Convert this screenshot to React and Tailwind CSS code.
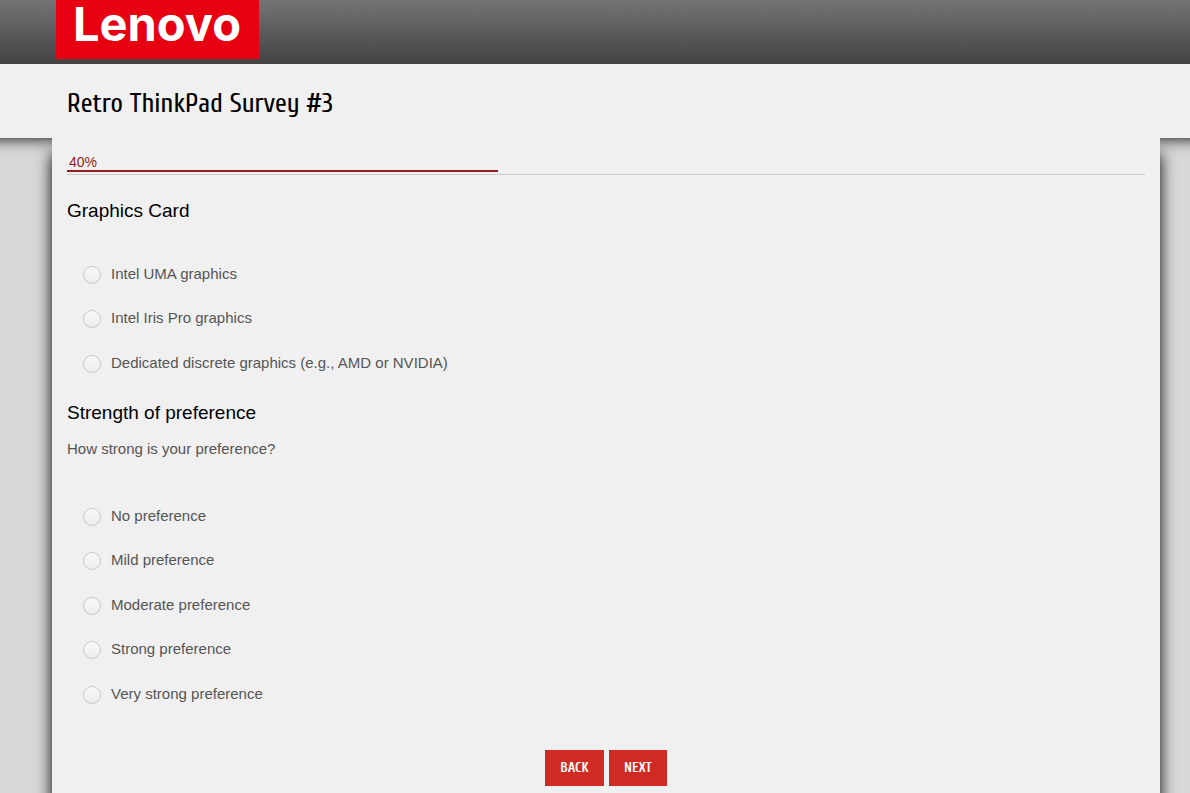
import React from 'react'

const graphics = [
    "Intel UMA graphics",
    "Intel Iris Pro graphics",
    "Dedicated discrete graphics (e.g., AMD or NVIDIA)",
];

const strengths = [
    "No preference",
    "Mild preference",
    "Moderate preference",
    "Strong preference",
    "Very strong preference",
];

function Logo() {
    return (
        <svg viewBox="0 0 203 59" className="block h-[59px] w-[203px] overflow-visible bg-[#e60012]" role="img" aria-label="Lenovo">
            <text x="17" y="41" fontSize="47" fontWeight="700" fill="#fff" fontFamily="Inter, sans-serif">Lenovo</text>
        </svg>
    )
}

function Options({ name, label, items }) {
    return (
        <div role="radiogroup" aria-label={label} className="pl-4">
            {items.map((item) => (
                <label key={item} className="flex w-fit cursor-pointer items-center gap-2.5 odd:h-[45px] even:h-11">
                    <input
                        type="radio"
                        name={name}
                        value={item}
                        className="size-[18px] shrink-0 appearance-none rounded-full border border-[#c8c8c8] bg-linear-to-b from-[#f9f9f9] to-[#ececec] checked:border-[5px] checked:border-[#cf2a24]"
                    />
                    <span className="pb-0.5">{item}</span>
                </label>
            ))}
        </div>
    )
}

function App() {
    const progress = 40;

    return (
        <div className="flex min-h-screen flex-col overflow-x-clip bg-[#d8d8da] font-['Liberation_Sans',Arial,sans-serif] text-[15px] leading-5 text-[#555]">
            {/* faint weave over the grey gradient */}
            <header className="relative z-10 h-16 bg-[repeating-linear-gradient(45deg,rgba(0,0,0,0.03)_0_1px,transparent_1px_3px),linear-gradient(#757575,#434343)] pl-14">
                <Logo />
            </header>

            {/* wider than the window so the shadow keeps straight at both ends */}
            <div className="relative -mx-4 bg-[#f0f0f0] pt-6 pb-[18px] pl-[83px] shadow-[0_0_15px_#000]">
                <h1 className="font-['Cuprum','Roboto',sans-serif] text-[27px] leading-8 font-medium text-black">Retro ThinkPad Survey #3</h1>
            </div>

            <main className="relative mr-[30px] ml-[52px] grow bg-[#f0f0f0] px-[15px] pt-4 pb-2 shadow-[0_16px_15px_#000]">
                <div className="border-b border-[#c9c9c9] pb-0.5" role="progressbar" aria-valuenow={progress} aria-valuemin={0} aria-valuemax={100}>
                    <div className="border-b-2 border-[#941c20] pl-0.5 text-[14px] leading-4 text-[#941c20]" style={{ width: `${progress}%` }}>
                        {progress}%
                    </div>
                </div>

                <form onSubmit={(e) => e.preventDefault()}>
                    <h2 className="mt-6 mb-[29px] text-[19px] leading-6 text-black">Graphics Card</h2>
                    <Options name="graphics" label="Graphics Card" items={graphics} />

                    <h2 className="mt-[15px] text-[19px] leading-6 text-black">Strength of preference</h2>
                    <p className="mt-3.5 mb-[35px]">How strong is your preference?</p>
                    <Options name="strength" label="Strength of preference" items={strengths} />

                    <div className="mt-[33px] flex justify-center gap-[5px] font-['Cuprum','Roboto',sans-serif] text-[14px] font-bold text-white">
                        <button type="button" className="h-9 min-w-[59px] cursor-pointer bg-[#cf2a24] px-3 hover:bg-[#941c20]">BACK</button>
                        <button type="submit" className="h-9 min-w-[58px] cursor-pointer bg-[#cf2a24] px-3 hover:bg-[#941c20]">NEXT</button>
                    </div>
                </form>
            </main>
        </div>
    )
}

export default App
